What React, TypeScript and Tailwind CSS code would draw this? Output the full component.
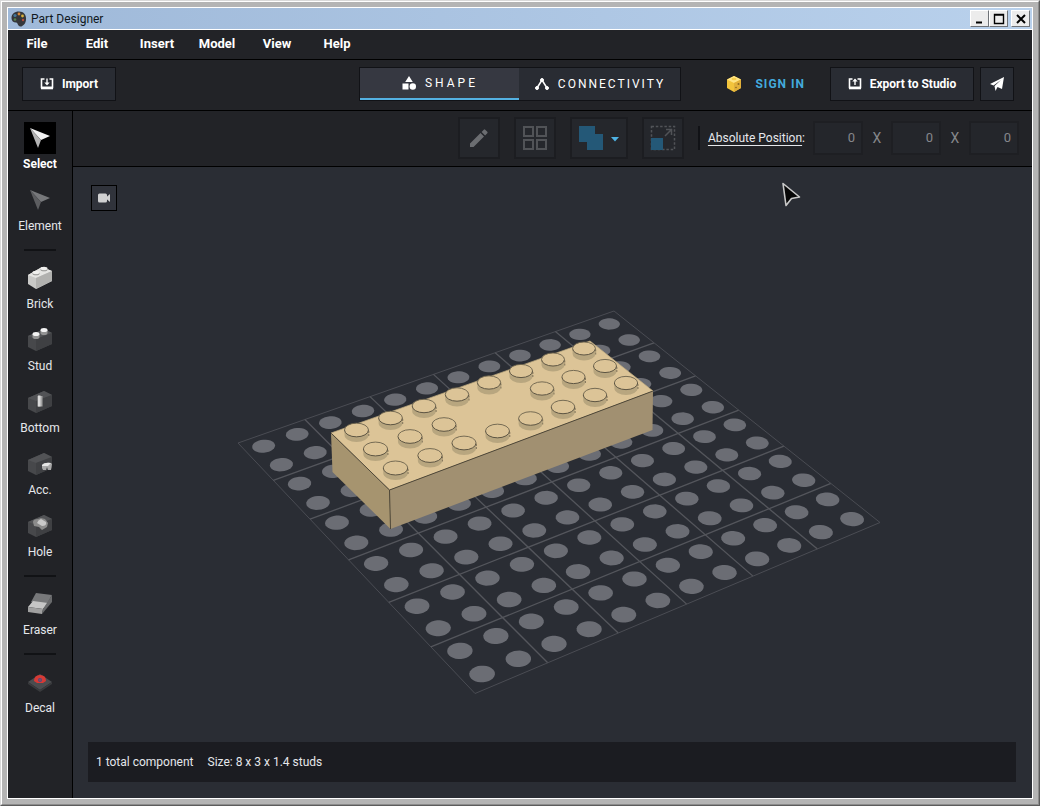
import type { ReactNode } from 'react'

const MENU = ['File', 'Edit', 'Insert', 'Model', 'View', 'Help']

const GRID = 12

type Point = [number, number]

// Projective map of the unit square on the four corners of the base plate.
function project(u: number, v: number): Point {
  const [x0, y0] = [238, 443]
  const [x1, y1] = [614, 311]
  const [x2, y2] = [880, 522.5]
  const [x3, y3] = [475, 693.5]
  const dx1 = x1 - x2
  const dx2 = x3 - x2
  const dx3 = x0 - x1 + x2 - x3
  const dy1 = y1 - y2
  const dy2 = y3 - y2
  const dy3 = y0 - y1 + y2 - y3
  const det = dx1 * dy2 - dx2 * dy1
  const g = (dx3 * dy2 - dx2 * dy3) / det
  const h = (dx1 * dy3 - dx3 * dy1) / det
  const w = g * u + h * v + 1
  return [
    ((x1 - x0 + g * x1) * u + (x3 - x0 + h * x3) * v + x0) / w,
    ((y1 - y0 + g * y1) * u + (y3 - y0 + h * y3) * v + y0) / w,
  ]
}

function disc(i: number, j: number): string {
  return Array.from({ length: 28 }, (_, k) => {
    const a = (k / 28) * Math.PI * 2
    return project((i + 0.5 + 0.3 * Math.cos(a)) / GRID, (j + 0.5 + 0.3 * Math.sin(a)) / GRID)
      .map((n) => n.toFixed(2))
      .join(',')
  }).join(' ')
}

const INDEXES = Array.from({ length: GRID }, (_, i) => i)
const LINES = [0, 1, 2, 3, 4, 5, 6]

const STUDS: Point[] = [
  [584, 348.5], [553, 359.5], [521, 371], [489, 382.5], [457, 394.5], [424, 406], [390.5, 418], [356.5, 430],
  [605, 366], [573.5, 377], [542, 388.5], [444, 424.5], [410, 436.5], [375.5, 449],
  [626, 383], [595, 395], [563, 407], [530.5, 418.5], [497.5, 431], [464, 443], [430, 455.5], [395.5, 468],
]

function Scene() {
  return (
    <svg viewBox="230 300 660 400" className="h-[400px] w-[660px] max-w-full" role="img" aria-label="Brick on base plate">
      {LINES.map((n) => {
        const edge = n === 0 || n === 6
        const [ax, ay] = project(n / 6, 0)
        const [bx, by] = project(n / 6, 1)
        const [cx, cy] = project(0, n / 6)
        const [dx, dy] = project(1, n / 6)
        return (
          <g key={n} stroke={edge ? '#4a4c53' : '#54565c'} strokeWidth={edge ? 1 : 1.3}>
            <line x1={ax} y1={ay} x2={bx} y2={by} />
            <line x1={cx} y1={cy} x2={dx} y2={dy} />
          </g>
        )
      })}
      {INDEXES.map((i) => INDEXES.map((j) => <polygon key={`${i}-${j}`} points={disc(i, j)} fill="#6b6d74" />))}
      <polygon points="331,433 590,341 653,391 389.5,490" fill="#dcc497" />
      <polygon points="331,433 389.5,490 390.5,529 332.5,472" fill="#a6946f" />
      <polygon points="389.5,490 653,391 652.5,430 390.5,529" fill="#a19071" />
      <path d="M331 433L389.5 490L390.5 529M389.5 490L653 391" fill="none" stroke="#4f4838" />
      <path d="M331 433L590 341L653 391" fill="none" stroke="#bca980" strokeWidth="0.7" />
      {STUDS.map(([x, y]) => {
        const r = 11.4 + (y - 348) / 140
        return (
          <g key={`${x}-${y}`}>
            <path d={`M${x - r} ${y}V${y + 5}A${r} 7 0 0 0 ${x + r} ${y + 5}V${y}Z`} fill="#b8a67f" />
            <ellipse cx={x} cy={y} rx={r} ry={r * 0.57} fill="#dcc497" />
            <path d={`M${x - r} ${y}A${r} ${r * 0.57} 0 0 1 ${x + r} ${y}`} fill="none" stroke="#6a614c" strokeWidth="0.9" />
            <path d={`M${x - r} ${y}A${r} ${r * 0.57} 0 0 0 ${x + r} ${y}`} fill="none" stroke="#5d5543" />
            <path d={`M${x + r + 0.3} ${y + 1}v5`} stroke="#5d5543" strokeWidth="0.7" strokeDasharray="2 1" />
          </g>
        )
      })}
    </svg>
  )
}

function Cube({ children }: { children?: ReactNode }) {
  return (
    <>
      <polygon points="4,12 20,5 28,9 28,20 12,27 4,23" fill="#47484b" />
      <polygon points="4,12 20,5 28,9 12,15" fill="#525356" />
      <polygon points="12,15 28,9 28,20 12,27" fill="#3f4043" />
      {children}
    </>
  )
}

function Arrow({ dim }: { dim?: boolean }) {
  return (
    <>
      <polygon points="6,6 26,14 17,18" fill={dim ? '#77787b' : '#f2f2f2'} />
      <polygon points="6,6 17,18 14,26" fill={dim ? '#5c5d60' : '#b4b4b4'} />
    </>
  )
}

const ICONS: Record<string, ReactNode> = {
  Select: <Arrow />,
  Element: <Arrow dim />,
  Brick: (
    <>
      <polygon points="4,13 18,5 28,9 28,19 12,27 4,22" fill="#c9c9c7" />
      <polygon points="4,13 18,5 28,9 12,16" fill="#e5e5e3" />
      <polygon points="12,16 28,9 28,19 12,27" fill="#b1b1af" />
      <ellipse cx="12" cy="11.5" rx="3.5" ry="1.8" fill="#8f8f8d" />
      <ellipse cx="12" cy="10.5" rx="3.5" ry="1.8" fill="#f0f0ee" />
      <ellipse cx="20" cy="7.5" rx="3.5" ry="1.8" fill="#8f8f8d" />
      <ellipse cx="20" cy="6.5" rx="3.5" ry="1.8" fill="#f0f0ee" />
    </>
  ),
  Stud: (
    <Cube>
      <path d="M8.5 10v3a3.500 2 0 0 0 7 0V10zM16.500 6v3a3.500 2 0 0 0 7 0V6z" fill="#939393" />
      <ellipse cx="12" cy="10" rx="3.500" ry="2" fill="#f3f3f3" />
      <ellipse cx="20" cy="6" rx="3.500" ry="2" fill="#f3f3f3" />
    </Cube>
  ),
  Bottom: (
    <Cube>
      <path d="M13.500 10h5v10.500h-5z" fill="#a4a4a4" />
      <path d="M14 9.500h2.500v11H14z" fill="#dadada" />
    </Cube>
  ),
  'Acc.': (
    <Cube>
      <path d="M18 17q2-3 9-2l1 1-1 6h-3l-1-3-1 3h-3l-1-2z" fill="#a9a9a9" />
      <path d="M18 17q3-3 9-2l-3 3h-6z" fill="#e6e6e6" />
    </Cube>
  ),
  Hole: (
    <Cube>
      <path d="M9 12q0-3 5-3l3-1 4 1 3 4-1 4-5 3-3-3-5-1z" fill="#8b8b8b" />
      <path d="M13 13q1-3 4-4l5 3q1 4-4 4z" fill="#c8c8c8" />
    </Cube>
  ),
  Eraser: (
    <>
      <polygon points="12,5 28,7 23,16 7,14" fill="#77787a" />
      <polygon points="9,13 24,15 19,21 4,19" fill="#c6c6c6" />
      <polygon points="4,19 19,21 18,26 4,24" fill="#a0a0a0" />
      <polygon points="19,21 28,7 28,14 18,26" fill="#696a6c" />
    </>
  ),
  Decal: (
    <>
      <polygon points="4,16 16,8 28,16 16,24" fill="#4b4c4f" />
      <polygon points="4,16 16,24 28,16 28,18 16,26 4,18" fill="#393a3d" />
      <path d="M10 15q0-6 6-6t6 6l-3 2h-6z" fill="#d63a35" />
      <circle cx="16" cy="14" r="2" fill="#494b84" />
      <circle cx="16" cy="14" r=".8" fill="#d63a35" />
    </>
  ),
}

function Tool({ name, active }: { name: string; active?: boolean }) {
  return (
    <button className="flex w-full flex-col items-center gap-0.5 pb-3">
      <span className={active ? 'bg-black' : ''}>
        <svg viewBox="0 0 32 32" className="block size-8">{ICONS[name]}</svg>
      </span>
      <span className={active ? 'text-xs font-bold text-white' : 'text-xs text-gray-200'}>{name}</span>
    </button>
  )
}

function Divider() {
  return <hr className="mt-[3px] mb-[11px] w-8 border-0 border-t-2 border-[#111215]" />
}

function TrayIcon({ up }: { up?: boolean }) {
  return (
    <svg viewBox="0 0 14 14" className="size-3.5" fill="none" stroke="#fff" strokeWidth="1.6">
      <path d="M4.500 2H1.500V10.500H12.500V2H9.500" />
      <path d="M1 11H13" strokeWidth="2.600" />
      <path d={up ? 'M7 8V2.500' : 'M7 1.500V6'} strokeWidth="1.400" />
      <path d={up ? 'M4.300 4.500L7 1.500L9.700 4.500Z' : 'M4.300 5.500L7 8.500L9.700 5.500Z'} fill="#fff" stroke="none" />
    </svg>
  )
}

function ToolbarButton({ label, wide, children }: { label: string; wide?: boolean; children: ReactNode }) {
  return (
    <button
      aria-label={label}
      className={
        (wide ? 'w-[58px]' : 'w-[42px]') +
        ' flex h-[42px] items-center justify-center gap-2 border-2 border-[#1c1d21] bg-[#25272c]'
      }
    >
      {children}
    </button>
  )
}

function PositionInput({ axis }: { axis: string }) {
  return (
    <input
      aria-label={'Position ' + axis}
      defaultValue="0"
      className="h-[34px] w-[50px] border-2 border-[#1e1f23] bg-[#24262b] px-1.5 text-right text-[13px] text-[#85878b] outline-none"
    />
  )
}

function WindowButton({ label, children }: { label: string; children: ReactNode }) {
  return (
    <button
      aria-label={label}
      className="flex h-[17px] w-[19px] items-center justify-center border border-t-white border-l-white border-r-[#6e7277] border-b-[#6e7277] bg-[#ececec]"
    >
      <svg viewBox="0 0 12 12" className="size-3" fill="none" stroke="#000">{children}</svg>
    </button>
  )
}

export default function App() {
  return (
    <div className="flex min-h-screen flex-col border border-t-[#d9d9d9] border-r-[#5c5c5c] border-b-[#5c5c5c] border-l-[#d9d9d9] bg-[#b4b4b4] font-['Roboto',sans-serif]">
      <div className="flex flex-1 flex-col border border-t-white border-l-white border-r-[#8c8c8c] border-b-[#8c8c8c] p-[5px]">
        <div className="flex flex-1 flex-col border border-white bg-[#222327] text-white">
          <header className="flex h-[22px] items-center border-b border-white bg-linear-to-r from-[#9fb9d9] to-[#b9d1ec] pr-0.5 pl-[3px] text-[#101820]">
            <svg viewBox="0 0 16 16" className="size-4">
              <path d="M8 .5C3.500.5.500 3 .500 7c0 3 2 4.500 4.500 4.500 1.500 0 1.500 1.500 2.500 3 1.500 2 4 1 6-1.500C16.500 8.500 15.500.500 8 .500z" fill="#35373b" />
              <circle cx="4" cy="4.500" r="1.600" fill="#43769a" />
              <circle cx="8" cy="3" r="1.400" fill="#d98738" />
              <circle cx="11.500" cy="5" r="1.400" fill="#d9b13c" />
              <circle cx="4" cy="8.500" r="1.300" fill="#56824b" />
              <circle cx="12" cy="9" r="1.200" fill="#b24c3b" />
            </svg>
            <h1 className="ml-1 flex-1 text-xs">Part Designer</h1>
            <WindowButton label="Minimize"><path d="M2 9.500H8" strokeWidth="2" /></WindowButton>
            <WindowButton label="Maximize"><path d="M1.500 1.500h9v9h-9zM1 2h10" strokeWidth="1.400" /></WindowButton>
            <span className="w-[3px]" />
            <WindowButton label="Close"><path d="M2 2L10 10M10 2L2 10" strokeWidth="2" /></WindowButton>
          </header>

          <nav className="flex h-[30px] items-center gap-2.5 border-b border-black pl-1 text-[13px] font-bold">
            {MENU.map((label) => (
              <button key={label} className="h-full w-[50px] pb-0.5 text-center">{label}</button>
            ))}
          </nav>

          <div className="flex h-[51px] items-center border-b border-black pr-[18px] pb-0.5 pl-3.5">
            <div className="flex-1">
              <button className="flex h-[34px] w-[94px] items-center justify-center gap-2 border border-[#111216] bg-[#292c33] text-xs font-bold">
                <TrayIcon />Import
              </button>
            </div>
            <div className="ml-1 flex h-[34px] border border-[#111216] text-xs">
              <button className="flex w-[159px] items-center justify-center gap-2 border-b-2 border-[#54b1e2] bg-[#363841] tracking-[3px]">
                <svg viewBox="0 0 16 16" className="size-4" fill="#fff">
                  <path d="M8 1l3.800 6H4.200zM1.500 8.500h6V14.500h-6z" /><circle cx="11.800" cy="11.500" r="3.200" />
                </svg>
                SHAPE
              </button>
              <button className="flex w-[161px] items-center justify-center gap-2 bg-[#292c33] tracking-[2px]">
                <svg viewBox="0 0 16 16" className="size-4" fill="#fff" stroke="#fff">
                  <path d="M3 12L8 4L13 12" fill="none" strokeWidth="1.500" /><circle cx="8" cy="4" r="1.500" /><circle cx="3" cy="12" r="1.500" /><circle cx="13" cy="12" r="1.500" />
                </svg>
                CONNECTIVITY
              </button>
            </div>
            <div className="flex flex-1 items-center justify-end">
              <a href="#signin" className="mr-[25px] flex items-center gap-3 text-xs font-bold tracking-[1px] text-[#43aadd]">
                <svg viewBox="0 0 18 18" className="size-[18px]">
                  <polygon points="9,1 16,4.500 16,13 9,17 2,13 2,4.500" fill="#f3c43c" />
                  <polygon points="9,1 16,4.500 9,8 2,4.500" fill="#ffe484" />
                  <polygon points="9,8 16,4.500 16,13 9,17" fill="#e2b03a" />
                  <ellipse cx="9" cy="4" rx="2.500" ry="1.200" fill="#f5cd4b" />
                  <circle cx="13.500" cy="9" r="1" fill="#8d6820" />
                  <circle cx="11" cy="12.500" r="0.800" fill="#8d6820" />
                </svg>
                SIGN IN
              </a>
              <button className="mr-1.5 flex h-[34px] w-[144px] items-center justify-center gap-2 border border-[#111216] bg-[#292c33] text-xs font-bold">
                <TrayIcon up />Export to Studio
              </button>
              <button aria-label="Send" className="flex h-[34px] w-[34px] items-center justify-center border border-[#111216] bg-[#292c33]">
                <svg viewBox="0 0 16 16" className="size-4" fill="#fff"><path d="M15 1L13 13L8.500 11L6.500 15L5.500 10L12 4L4.500 9.500L1 8Z" /></svg>
              </button>
            </div>
          </div>

          <div className="flex flex-1">
            <aside className="flex w-[65px] flex-col items-center border-r border-black pt-[11px]">
              <Tool name="Select" active />
              <Tool name="Element" />
              <Divider />
              <Tool name="Brick" />
              <Tool name="Stud" />
              <Tool name="Bottom" />
              <Tool name="Acc." />
              <Tool name="Hole" />
              <Divider />
              <Tool name="Eraser" />
              <Divider />
              <Tool name="Decal" />
            </aside>

            <div className="flex min-w-0 flex-1 flex-col">
              <div className="flex h-14 items-center justify-end border-b border-black pr-[13px] pb-0.5">
                <div className="mr-3.5 flex gap-3.5">
                  <ToolbarButton label="Edit">
                    <svg viewBox="0 0 24 24" className="size-6" fill="#6b6d71"><path d="M3 17.500V21h3.500L17 10.500 13.500 7zM20.300 7.200a1 1 0 0 0 0-1.400l-2.100-2.100a1 1 0 0 0-1.400 0L14.600 5.900 18.100 9.400z" /></svg>
                  </ToolbarButton>
                  <ToolbarButton label="Grid">
                    <svg viewBox="0 0 26 26" className="size-[26px]" fill="none" stroke="#515357" strokeWidth="2"><path d="M2 2h9v9H2zM15 2h9v9h-9zM2 15h9v9H2zM15 15h9v9h-9z" /></svg>
                  </ToolbarButton>
                  <ToolbarButton label="Combine" wide>
                    <svg viewBox="0 0 24 24" className="size-6" fill="#245877"><path d="M0 0h16v8h8v16H8v-8H0z" /></svg>
                    <svg viewBox="0 0 8 5" className="mt-1 h-[5px] w-2" fill="#4eb2e4"><path d="M0 0h8L4 4.500z" /></svg>
                  </ToolbarButton>
                  <ToolbarButton label="Scale">
                    <svg viewBox="0 0 26 26" className="size-[26px]" fill="none" stroke="#515357" strokeWidth="1.500">
                      <rect x="1.500" y="1.500" width="23" height="23" strokeDasharray="2.500 1.800" />
                      <path d="M15 11L22 4M16 4.500h5.500V10" />
                      <path d="M1 13h12v12H1z" fill="#245877" stroke="none" />
                    </svg>
                  </ToolbarButton>
                </div>
                <span className="mr-2 h-6 w-0.5 bg-[#111216]" />
                <span className="mr-2 text-xs text-gray-200"><span className="underline underline-offset-3">Absolute Position</span>:</span>
                <div className="flex items-center text-sm text-[#85878b]">
                  <PositionInput axis="x" /><span className="w-7 text-center">X</span>
                  <PositionInput axis="y" /><span className="w-7 text-center">X</span>
                  <PositionInput axis="z" />
                </div>
              </div>

              <main className="relative flex flex-1 flex-col bg-[#2a2d34] pt-[18px] pr-4 pb-4 pl-[15px]">
                <button aria-label="Camera" className="ml-[3px] flex size-[26px] items-center justify-center border border-black bg-[#30333b]">
                  <svg viewBox="0 0 14 12" className="h-3 w-3.5" fill="#d0d1d2"><rect x="1" y="1.500" width="9" height="9" rx="1.500" /><path d="M9.500 5L13 2V10L9.500 7Z" /></svg>
                </button>
                <div className="flex justify-center pt-[89px] pl-[15px]"><Scene /></div>
                <footer className="mt-auto flex h-10 items-center gap-3.5 bg-[#1b1c21] px-2 text-xs text-gray-200">
                  <span>1 total component</span>
                  <span>Size: 8 x 3 x 1.4 studs</span>
                </footer>
                <svg viewBox="0 0 20 26" className="absolute top-[14px] left-[708px] h-[26px] w-5"><path d="M2 2.500L18.500 16L10.500 17.500L5 24.500Z" fill="#070707" stroke="#c9c9c9" strokeWidth="1.600" strokeLinejoin="round" /></svg>
              </main>
            </div>
          </div>
        </div>
      </div>
    </div>
  )
}
